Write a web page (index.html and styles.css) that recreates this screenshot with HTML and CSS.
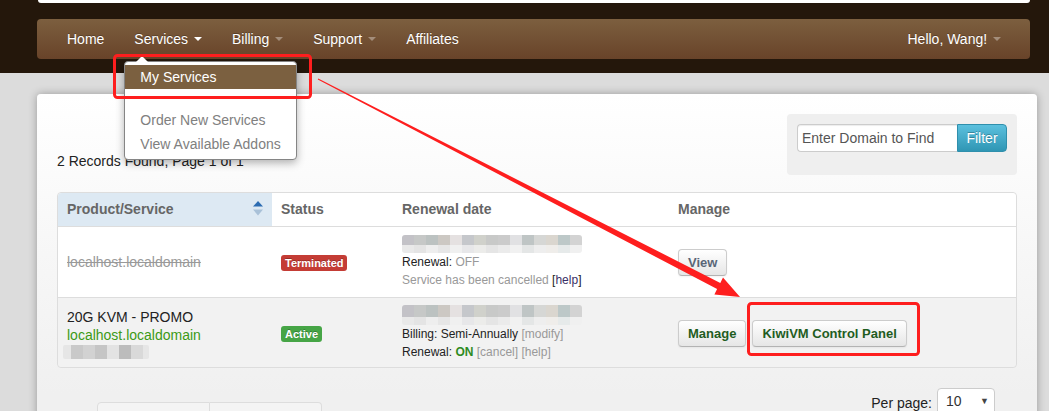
FILE: index.html
```html
<!DOCTYPE html>
<html>
<head>
<meta charset="utf-8">
<title>My Services</title>
<link rel="stylesheet" href="styles.css">
</head>
<body>
<div class="page">
  <header class="band">
    <div class="topstrip"></div>
    <nav class="navbar">
      <ul class="nav">
        <li><a>Home</a></li>
        <li class="open"><a>Services <b class="caret"></b></a>
          <ul class="dropdown">
            <li class="active"><a>My Services</a></li>
            <li class="divider"></li>
            <li><a>Order New Services</a></li>
            <li><a>View Available Addons</a></li>
          </ul>
        </li>
        <li><a>Billing <b class="caret dim"></b></a></li>
        <li><a>Support <b class="caret dim"></b></a></li>
        <li><a>Affiliates</a></li>
      </ul>
      <ul class="nav">
        <li><a>Hello, Wang! <b class="caret dim"></b></a></li>
      </ul>
    </nav>
  </header>

  <main class="card">
    <div class="toolbar">
      <p class="records">2 Records Found, Page 1 of 1</p>
      <form class="well">
        <input class="search" type="text" value="Enter Domain to Find">
        <button class="filter" type="button">Filter</button>
      </form>
    </div>

    <table class="services">
      <colgroup>
        <col class="c1"><col class="c2"><col class="c3"><col class="c4">
      </colgroup>
      <thead>
        <tr>
          <th class="sorted"><span class="th-inner">Product/Service
            <svg class="sort" width="10" height="15" viewBox="0 0 10 15"><path d="M0 5.5 L5 0 L10 5.5 Z" fill="#2c6cb2"/><path d="M0 8.5 L10 8.5 L5 14.5 Z" fill="#a9c1d8"/></svg></span></th>
          <th>Status</th>
          <th>Renewal date</th>
          <th>Manage</th>
        </tr>
      </thead>
      <tbody>
        <tr class="row-a">
          <td><span class="struck">localhost.localdomain</span></td>
          <td><span class="label terminated">Terminated</span></td>
          <td class="small">
            <div class="mosaic"></div>
            <div><span class="dark">Renewal:</span> <span class="muted">OFF</span></div>
            <div class="muted">Service has been cancelled <span class="dark">[</span><span class="visited">help</span><span class="dark">]</span></div>
          </td>
          <td><div class="actions"><a class="btn view">View</a></div></td>
        </tr>
        <tr class="row-b">
          <td>
            <div class="dark">20G KVM - PROMO</div>
            <div class="domain">localhost.localdomain</div>
            <div class="mosaic short"></div>
          </td>
          <td><span class="label active">Active</span></td>
          <td class="small">
            <div class="mosaic tall"></div>
            <div><span class="dark">Billing: Semi-Annually</span> <span class="muted">[modify]</span></div>
            <div><span class="dark">Renewal:</span> <b class="on">ON</b> <span class="muted">[cancel]</span> <span class="muted">[help]</span></div>
          </td>
          <td><div class="actions"><a class="btn">Manage</a><a class="btn">KiwiVM Control Panel</a></div></td>
        </tr>
      </tbody>
    </table>

    <div class="footer-row">
      <ul class="pagination"><li></li><li></li></ul>
      <div class="perpage">
        <span>Per page:</span>
        <span class="select">10<span class="arrow">▼</span></span>
      </div>
    </div>
  </main>
</div>

<svg class="annot" width="1049" height="411" viewBox="0 0 1049 411">
  <rect x="114.5" y="55.5" width="196" height="42" rx="3" fill="none" stroke="#fe1e1e" stroke-width="3"/>
  <rect x="748.5" y="303.5" width="170" height="51" rx="3" fill="none" stroke="#fe1e1e" stroke-width="3"/>
  <polygon points="318.2,78.6 720.3,282.9 723,277.6 740,297 714.4,294.4 717.1,289.1 317.8,79.4" fill="#fe1e1e"/>
</svg>
</body>
</html>
```

FILE: styles.css
```css
html, body {
  margin: 0;
  height: 100%;
  overflow: hidden;
}

body {
  position: relative;
  background: #dcdcdc;
  font-family: "Liberation Sans", Arial, sans-serif;
  font-size: 14px;
  line-height: 20px;
  color: #333;
}

/* ---------- header band ---------- */
.band {
  background: #24170b;
  height: 73px;
  padding: 0 19px 0 37px;
}

.topstrip {
  height: 3px;
  margin-left: 1px;
  background: #fff;
  border-radius: 0 0 4px 4px;
}

.navbar {
  margin-top: 16px;
  height: 40px;
  display: flex;
  justify-content: space-between;
  padding: 0 14px 0 15px;
  background: linear-gradient(#7c5f3f, #684329);
  border-radius: 4px;
}

.nav {
  list-style: none;
  margin: 0;
  padding: 0;
  display: flex;
}

.nav > li {
  position: relative;
}

.nav > li > a {
  display: block;
  padding: 10px 15px;
  line-height: 20px;
  color: #fff;
  text-shadow: 0 -1px 0 rgba(0, 0, 0, 0.25);
  white-space: nowrap;
}

.caret {
  display: inline-block;
  width: 0;
  height: 0;
  margin-top: 8px;
  margin-left: 2px;
  vertical-align: top;
  border-top: 4px solid #fff;
  border-left: 4px solid transparent;
  border-right: 4px solid transparent;
}

.caret.dim {
  border-top-color: rgba(255, 255, 255, 0.35);
}

/* ---------- dropdown ---------- */
.dropdown {
  position: absolute;
  top: 42px;
  left: 5px;
  z-index: 10;
  width: 171px;
  margin: 0;
  padding: 3px 0;
  list-style: none;
  background: #fff;
  border: 1px solid #858585;
  border-radius: 4px;
  box-shadow: 0 3px 8px rgba(0, 0, 0, 0.3);
}

.dropdown::before {
  content: "";
  position: absolute;
  top: -6px;
  left: 11px;
  border-left: 6px solid transparent;
  border-right: 6px solid transparent;
  border-bottom: 6px solid #fff;
}

.dropdown a {
  display: block;
  padding: 2px 15px;
  line-height: 20px;
  color: #808080;
  white-space: nowrap;
}

.dropdown .active a {
  background: #7b6040;
  color: #fff;
}

.dropdown .divider {
  height: 1px;
  margin: 9px 1px;
  background: #fff;
}

/* ---------- card ---------- */
.card {
  margin: 21px 12px 0 37px;
  height: 400px;
  padding: 20px 20px 0;
  background: linear-gradient(#ffffff, #f0f0f0 300px);
  border-radius: 4px;
  box-shadow: 0 0 8px rgba(0, 0, 0, 0.3);
}

.toolbar {
  display: flex;
  justify-content: space-between;
  align-items: flex-end;
}

.records {
  margin: 0 0 4px;
  color: #222;
}

.well {
  display: flex;
  margin: 0;
  padding: 10px 10px 23px;
  background: #efefef;
  border-radius: 4px;
}

.search {
  box-sizing: border-box;
  width: 160px;
  height: 28px;
  margin: 0;
  padding: 0 4px;
  font: 14px "Liberation Sans", Arial, sans-serif;
  color: #555;
  background: #fff;
  border: 1px solid #ccc;
  border-right: 0;
  border-radius: 4px 0 0 4px;
  box-shadow: inset 0 1px 1px rgba(0, 0, 0, 0.075);
  outline: none;
}

.filter {
  box-sizing: border-box;
  width: 50px;
  height: 28px;
  margin: 0;
  padding: 0;
  font: 14px "Liberation Sans", Arial, sans-serif;
  color: #fff;
  text-shadow: 0 -1px 0 rgba(0, 0, 0, 0.25);
  background: linear-gradient(#5bc0de, #2f96b4);
  border: 1px solid #2f8fac;
  border-radius: 0 4px 4px 0;
}

/* ---------- table ---------- */
.services {
  width: 960px;
  margin-top: 17px;
  table-layout: fixed;
  border-collapse: separate;
  border-spacing: 0;
  border: 1px solid #dddddd;
  border-radius: 4px;
}

.c1 { width: 214px; }
.c2 { width: 121px; }
.c3 { width: 276px; }
.c4 { width: 347px; }

.services th {
  padding: 6px 9px 7px;
  text-align: left;
  font-weight: bold;
  color: #666;
  background: #fff;
  border-bottom: 1px solid #dddddd;
}

.services th:first-child { border-top-left-radius: 4px; }
.services th:last-child { border-top-right-radius: 4px; }

.services th.sorted {
  background: #dde9f3;
}

.th-inner {
  display: flex;
  justify-content: space-between;
  align-items: center;
}

.sort {
  display: block;
  margin-top: -2px;
}

.services td {
  padding: 8px 9px;
  vertical-align: middle;
}

.row-a td { background: #fff; }

.row-b td {
  padding: 7px 9px 6px;
  background: #f2f2f2;
  border-top: 1px solid #dddddd;
}

.row-b td:first-child { border-bottom-left-radius: 4px; }
.row-b td:last-child { border-bottom-right-radius: 4px; }

.services td > div { line-height: 18px; }

.small {
  font-size: 12px;
}

.dark { color: #222; }
.muted { color: #999; }
.visited { color: #3a2f66; }
.on { color: #2e8b22; }

.struck {
  color: #999;
  text-decoration: line-through;
}

.domain { color: #3c9a16; }

.label {
  display: inline-block;
  padding: 2px 4px;
  font-size: 11px;
  line-height: 12px;
  font-weight: bold;
  color: #fff;
  text-shadow: 0 -1px 0 rgba(0, 0, 0, 0.25);
  border-radius: 3px;
}

.label.terminated { background: #c43c35; }
.label.active { background: #46a546; }

.mosaic {
  width: 180px;
  height: 18px;
  border-radius: 3px;
  filter: blur(0.4px);
  background:
    linear-gradient(90deg,
      #c3c2c7 0 12px, #c6c8c7 12px 24px, #bcc2c1 24px 36px, #ccc8c3 36px 48px,
      #e5e1e1 48px 60px, #c5c7cb 60px 72px, #d0d1cb 72px 84px, #c8c9c8 84px 96px,
      #cbcbcb 96px 108px, #e1e1e3 108px 120px, #bfc5c5 120px 132px, #d6d7d5 132px 144px,
      #dad6cf 144px 156px, #bdc8c8 156px 168px, #d3d3d3 168px 180px) top / 100% 10px no-repeat,
    linear-gradient(90deg,
      #e9e9e9 0 12px, #e4e4e4 12px 24px, #eeeeee 24px 36px, #e6e6e6 36px 48px,
      #f0f0f0 48px 60px, #e7e7e9 60px 72px, #ececea 72px 84px, #e5e5e5 84px 96px,
      #ebebeb 96px 108px, #f1f1f1 108px 120px, #e4e6e6 120px 132px, #eeeeee 132px 144px,
      #efedea 144px 156px, #e6eaea 156px 168px, #f0f0f0 168px 180px) bottom / 100% 8px no-repeat;
}

.mosaic.tall {
  height: 20px;
  background-size: 100% 12px, 100% 8px;
}

.mosaic.short {
  width: 86px;
  height: 14px;
  margin-top: 1px;
  margin-left: -4px;
  border-radius: 2px;
  background:
    linear-gradient(90deg,
      #e6e6e6 0 8px, #c9c9c9 8px 20px, #d2d2d2 20px 32px, #c5c5c5 32px 44px,
      #e3e3e3 44px 56px, #bcbcbc 56px 68px, #d9d9d9 68px 80px, #e6e6e6 80px 86px) bottom / 100% 14px no-repeat;
}

.actions {
  display: flex;
  gap: 6px;
}

.btn {
  display: inline-block;
  padding: 4px 9px;
  font-size: 13px;
  line-height: 17px;
  font-weight: bold;
  color: #1f5d1f;
  white-space: nowrap;
  background: linear-gradient(#ffffff, #e6e6e6);
  border: 1px solid #cccccc;
  border-bottom-color: #b3b3b3;
  border-radius: 4px;
  box-shadow: inset 0 1px 0 rgba(255, 255, 255, 0.2), 0 1px 2px rgba(0, 0, 0, 0.05);
}

.btn.view { color: #5a6677; }

/* ---------- footer ---------- */
.footer-row {
  display: flex;
  justify-content: space-between;
  align-items: flex-start;
  margin-top: 20px;
}

.pagination {
  display: flex;
  margin: 14px 0 0 40px;
  padding: 0;
  list-style: none;
}

.pagination li {
  width: 111px;
  height: 30px;
  border: 1px solid #dddddd;
  background: #f4f4f4;
}

.pagination li:first-child { border-radius: 4px 0 0 0; }
.pagination li + li { border-left: 0; border-radius: 0 4px 0 0; }

.perpage {
  display: flex;
  align-items: center;
  gap: 5px;
  margin-right: 22px;
  color: #222;
}

.select {
  box-sizing: border-box;
  display: flex;
  justify-content: space-between;
  align-items: center;
  width: 58px;
  height: 30px;
  padding: 0 5px 4px 8px;
  background: #fff;
  border: 1px solid #cccccc;
  border-radius: 4px;
  color: #333;
}

.arrow {
  font-size: 9px;
  color: #444;
}

/* ---------- annotation overlay ---------- */
.annot {
  position: absolute;
  top: 0;
  left: 0;
  z-index: 20;
  pointer-events: none;
}
```
